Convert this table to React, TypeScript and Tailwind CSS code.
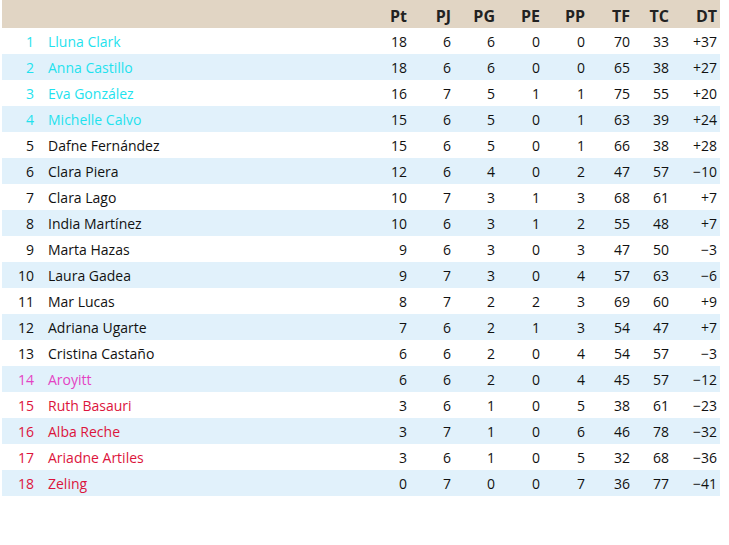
const rows: [number, string, number, number, number, number, number, number, number, string][] = [
  [1, 'Lluna Clark', 18, 6, 6, 0, 0, 70, 33, '+37'],
  [2, 'Anna Castillo', 18, 6, 6, 0, 0, 65, 38, '+27'],
  [3, 'Eva González', 16, 7, 5, 1, 1, 75, 55, '+20'],
  [4, 'Michelle Calvo', 15, 6, 5, 0, 1, 63, 39, '+24'],
  [5, 'Dafne Fernández', 15, 6, 5, 0, 1, 66, 38, '+28'],
  [6, 'Clara Piera', 12, 6, 4, 0, 2, 47, 57, '−10'],
  [7, 'Clara Lago', 10, 7, 3, 1, 3, 68, 61, '+7'],
  [8, 'India Martínez', 10, 6, 3, 1, 2, 55, 48, '+7'],
  [9, 'Marta Hazas', 9, 6, 3, 0, 3, 47, 50, '−3'],
  [10, 'Laura Gadea', 9, 7, 3, 0, 4, 57, 63, '−6'],
  [11, 'Mar Lucas', 8, 7, 2, 2, 3, 69, 60, '+9'],
  [12, 'Adriana Ugarte', 7, 6, 2, 1, 3, 54, 47, '+7'],
  [13, 'Cristina Castaño', 6, 6, 2, 0, 4, 54, 57, '−3'],
  [14, 'Aroyitt', 6, 6, 2, 0, 4, 45, 57, '−12'],
  [15, 'Ruth Basauri', 3, 6, 1, 0, 5, 38, 61, '−23'],
  [16, 'Alba Reche', 3, 7, 1, 0, 6, 46, 78, '−32'],
  [17, 'Ariadne Artiles', 3, 6, 1, 0, 5, 32, 68, '−36'],
  [18, 'Zeling', 0, 7, 0, 0, 7, 36, 77, '−41'],
];

const heads = ['Pt', 'PJ', 'PG', 'PE', 'PP', 'TF', 'TC', 'DT'];

// right-aligned stat columns
const colCls = [
  'w-[44px] pr-[3px]',
  'w-[44px] pr-[3px]',
  'w-[44px] pr-[3px]',
  'w-[45px] pr-[3px]',
  'w-[45px] pr-[3px]',
  'w-[45px] pr-[3px]',
  'w-[39px] pr-[3px]',
  'w-[48px] pr-[3px]',
];

function nameColor(rank: number) {
  if (rank <= 4) return 'text-[#1fe2ee]';
  if (rank === 14) return 'text-[#e443c4]';
  if (rank >= 15) return 'text-[#dc143c]';
  return 'text-[#111]';
}

export default function App() {
  return (
    <div className="min-h-[545px] bg-white pl-[2px] font-['Open_Sans',sans-serif] text-[14px] text-[#111]">
      <div className="w-[718px]">
        <div className="flex h-[28px] items-center bg-[#e1d5c4] pt-[3px] text-[16px] font-bold text-[#222]">
          <div className="w-[36px]" />
          <div className="w-[328px]" />
          {heads.map((h, i) => (
            <div key={h} className={`${colCls[i]} text-right`}>
              {h}
            </div>
          ))}
        </div>
        {rows.map((r, idx) => {
          const [rank, name, ...stats] = r;
          return (
            <div
              key={rank}
              className={`flex h-[26px] items-center ${idx % 2 === 1 ? 'bg-[#e1f1fb]' : 'bg-white'}`}
            >
              <div className={`w-[36px] pr-[4px] text-right ${nameColor(rank)}`}>{rank}</div>
              <div className={`w-[328px] pl-[10px] ${nameColor(rank)}`}>{name}</div>
              {stats.map((s, i) => (
                <div key={i} className={`${colCls[i]} text-right`}>
                  {s}
                </div>
              ))}
            </div>
          );
        })}
      </div>
    </div>
  );
}
